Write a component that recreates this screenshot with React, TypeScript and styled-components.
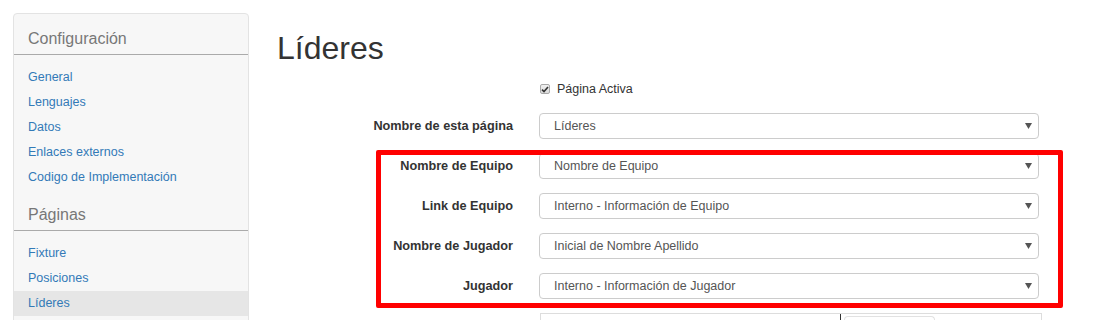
import React from "react";
import styled, { createGlobalStyle } from "styled-components";

const GlobalStyle = createGlobalStyle`
  html, body {
    margin: 0;
    padding: 0;
    background: #fff;
    font-family: "Liberation Sans", Arial, sans-serif;
    color: #333;
    overflow: hidden;
  }
  * { box-sizing: border-box; }
`;

const Page = styled.div`
  display: flex;
  align-items: flex-start;
  width: 1093px;
  height: 320px;
  overflow: hidden;
`;

const Sidebar = styled.aside`
  margin: 13px 0 0 13px;
  width: 236px;
  min-height: 330px;
  background: #f7f7f7;
  border: 1px solid #e3e3e3;
  border-radius: 4px;
`;

const SectionTitle = styled.h3`
  margin: 0;
  padding: 15px 14px 5px;
  font-size: 16px;
  line-height: 20px;
  font-weight: normal;
  color: #777;
  border-bottom: 1px solid #aaa;
`;

const LinkList = styled.ul`
  list-style: none;
  margin: 0;
  padding: 10px 0 0;
`;

const LinkItem = styled.li<{ $active?: boolean }>`
  height: 25px;
  line-height: 25px;
  padding-left: 14px;
  font-size: 12.5px;
  color: #337ab7;
  background: ${(p) => (p.$active ? "#e6e6e6" : "transparent")};
`;

const Main = styled.main`
  margin: 31px 0 0 28px;
  display: flex;
  flex-direction: column;
`;

const Title = styled.h1`
  margin: 0 0 13px;
  font-size: 32px;
  line-height: 35px;
  font-weight: normal;
  color: #333;
`;

const Form = styled.div`
  display: flex;
  flex-direction: column;
  gap: 14px;
`;

const Row = styled.div`
  display: grid;
  grid-template-columns: 236px 500px;
  column-gap: 26px;
  align-items: center;
`;

const Label = styled.label`
  text-align: right;
  font-size: 12.7px;
  font-weight: bold;
  color: #333;
`;

const CheckLine = styled.div`
  grid-column: 2;
  display: flex;
  align-items: center;
  gap: 7px;
  height: 20px;
  padding-left: 1px;
  font-size: 12.5px;
  color: #333;
`;

const CheckBox = styled.span`
  display: inline-flex;
  align-items: center;
  justify-content: center;
  width: 10px;
  height: 10px;
  border: 1px solid #a9a9a9;
  border-radius: 2px;
  background: linear-gradient(#f0f0f0, #dcdcdc);
`;

const Select = styled.div`
  height: 26px;
  display: flex;
  align-items: center;
  justify-content: space-between;
  padding: 0 6px 0 14px;
  border: 1px solid #ccc;
  border-radius: 4px;
  background: #fff;
  font-size: 12.5px;
  color: #555;
`;

const Highlight = styled.div`
  position: relative;
  display: flex;
  flex-direction: column;
  gap: 14px;

  &::after {
    content: "";
    position: absolute;
    top: -3px;
    bottom: -9px;
    left: 99px;
    right: -24px;
    border: 5px solid #ff0000;
    border-radius: 2px;
    pointer-events: none;
  }
`;

const SplitField = styled.div`
  grid-column: 2;
  width: 502px;
  height: 30px;
  margin-left: 1px;
  display: flex;
  border: 1px solid #ddd;
  border-bottom: none;
`;

const SplitLeft = styled.div`
  width: 300px;
  border-right: 1px solid #333;
`;

const SplitChip = styled.div`
  margin: 2px 0 0 3px;
  width: 91px;
  border: 1px solid #e2e2e2;
  border-radius: 4px 4px 0 0;
  border-bottom: none;
`;

const Arrow = () => (
  <svg width="7" height="6" viewBox="0 0 7 6">
    <path d="M0 0h7L3.5 6z" fill="#555" />
  </svg>
);

const Field = ({ label, value }: { label: string; value: string }) => (
  <Row>
    <Label>{label}</Label>
    <Select>
      <span>{value}</span>
      <Arrow />
    </Select>
  </Row>
);

export default function App() {
  return (
    <>
      <GlobalStyle />
      <Page>
        <Sidebar>
          <SectionTitle>Configuración</SectionTitle>
          <LinkList>
            <LinkItem>General</LinkItem>
            <LinkItem>Lenguajes</LinkItem>
            <LinkItem>Datos</LinkItem>
            <LinkItem>Enlaces externos</LinkItem>
            <LinkItem>Codigo de Implementación</LinkItem>
          </LinkList>
          <SectionTitle>Páginas</SectionTitle>
          <LinkList>
            <LinkItem>Fixture</LinkItem>
            <LinkItem>Posiciones</LinkItem>
            <LinkItem $active>Líderes</LinkItem>
          </LinkList>
        </Sidebar>
        <Main>
          <Title>Líderes</Title>
          <Form>
            <Row>
              <CheckLine>
                <CheckBox>
                  <svg width="8" height="7" viewBox="0 0 8 7">
                    <path d="M1 3.6l2 2L7 1" stroke="#333" strokeWidth="1.6" fill="none" />
                  </svg>
                </CheckBox>
                Página Activa
              </CheckLine>
            </Row>
            <Field label="Nombre de esta página" value="Líderes" />
            <Highlight>
              <Field label="Nombre de Equipo" value="Nombre de Equipo" />
              <Field label="Link de Equipo" value="Interno - Información de Equipo" />
              <Field label="Nombre de Jugador" value="Inicial de Nombre Apellido" />
              <Field label="Jugador" value="Interno - Información de Jugador" />
            </Highlight>
            <Row>
              <SplitField>
                <SplitLeft />
                <SplitChip />
              </SplitField>
            </Row>
          </Form>
        </Main>
      </Page>
    </>
  );
}
